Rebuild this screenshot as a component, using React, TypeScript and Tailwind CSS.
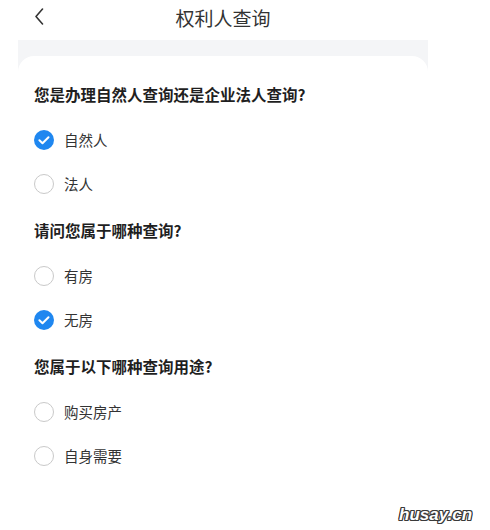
import React, { useState } from 'react';

type Question = {
  id: string;
  title: string;
  options: string[];
};

const questions: Question[] = [
  { id: 'type', title: '您是办理自然人查询还是企业法人查询?', options: ['自然人', '法人'] },
  { id: 'house', title: '请问您属于哪种查询?', options: ['有房', '无房'] },
  { id: 'usage', title: '您属于以下哪种查询用途?', options: ['购买房产', '自身需要'] },
];

const RadioMark = ({ checked }: { checked: boolean }) =>
  checked ? (
    <svg width="20" height="20" viewBox="0 0 20 20" className="shrink-0">
      <circle cx="10" cy="10" r="10" fill="#1f87f0" />
      <path d="M5.4 10.2l3.1 3 6-6" fill="none" stroke="#fff" strokeWidth="2" strokeLinecap="round" strokeLinejoin="round" />
    </svg>
  ) : (
    <span className="w-5 h-5 shrink-0 rounded-full border border-[#c9c9c9] bg-white" />
  );

export default function App() {
  const [answers, setAnswers] = useState<Record<string, string>>({
    type: '自然人',
    house: '无房',
    usage: '',
  });

  return (
    <div className="relative w-[490px] h-[530px] bg-white overflow-hidden font-['Noto_Sans_CJK_SC','Noto_Sans',sans-serif]">
      <div className="ml-[18px] w-[410px]">
        {/* Header */}
        <div className="relative h-10 flex items-center justify-center">
          <button className="absolute left-[12px] top-[4px] p-1">
            <svg width="10" height="17" viewBox="0 0 10 17">
              <path d="M8.5 1L2 8.5l6.5 7.5" fill="none" stroke="#333" strokeWidth="1.6" strokeLinecap="round" strokeLinejoin="round" />
            </svg>
          </button>
          <h1 className="text-[19px] leading-none text-[#333] -mt-[6px]">权利人查询</h1>
        </div>

        {/* Body */}
        <div className="bg-[#f4f5f7] pt-4">
          <div className="bg-white rounded-t-[16px] pt-[28px] pl-4 h-[480px]">
            {questions.map((q) => (
              <div key={q.id} className="mb-[14px]">
                <div className="h-[22px] flex items-center text-[15.5px] font-bold text-[#1f1f1f]">{q.title}</div>
                <div className="mt-3">
                  {q.options.map((opt) => (
                    <div
                      key={opt}
                      onClick={() => setAnswers({ ...answers, [q.id]: opt })}
                      className="h-11 flex items-center gap-[10px] cursor-pointer"
                    >
                      <RadioMark checked={answers[q.id] === opt} />
                      <span className="text-[14.5px] text-[#333]">{opt}</span>
                    </div>
                  ))}
                </div>
              </div>
            ))}
          </div>
        </div>
      </div>

      {/* watermark */}
      <span className="absolute left-[399px] top-[502px] text-[17px] font-bold italic text-white font-['Liberation_Sans',sans-serif] [text-shadow:1px_0_#3a3a3a,-1px_0_#3a3a3a,0_1px_#3a3a3a,0_-1px_#3a3a3a,1px_1px_#3a3a3a,-1px_-1px_#3a3a3a,1px_-1px_#3a3a3a,-1px_1px_#3a3a3a]">
        husay.cn
      </span>
    </div>
  );
}
